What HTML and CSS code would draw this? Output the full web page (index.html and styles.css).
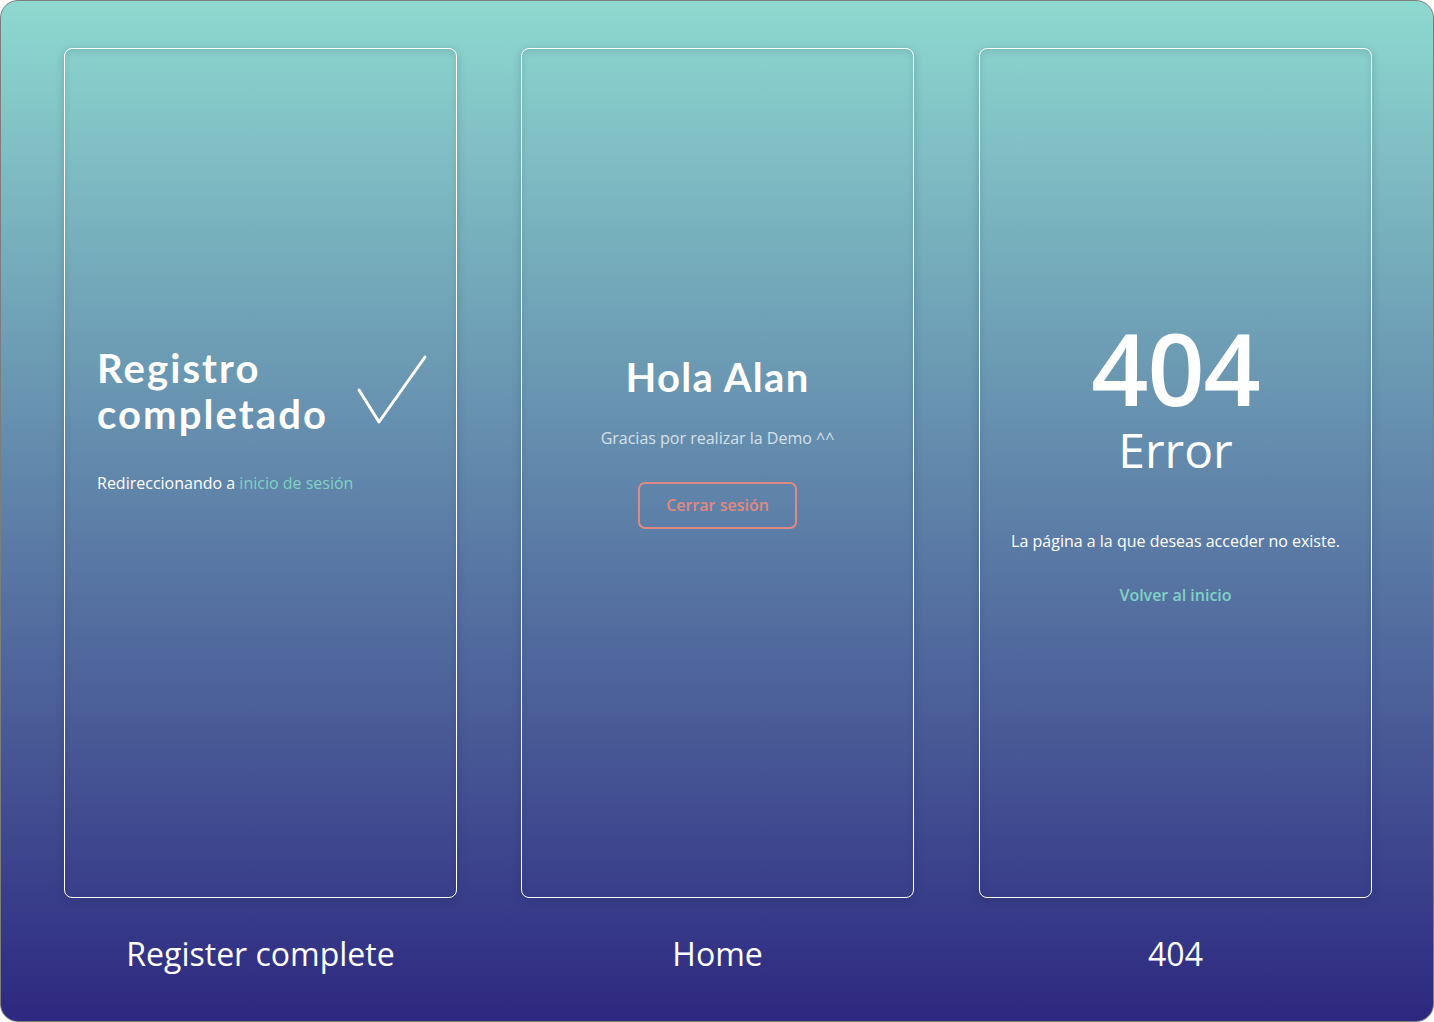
FILE: index.html
```html
<!DOCTYPE html>
<html lang="es">
<head>
<meta charset="utf-8">
<title>Screens</title>
<link rel="stylesheet" href="styles.css">
</head>
<body>
<div class="frame">
  <div class="grid">
    <div class="col">
      <div class="card card-register">
        <div class="reg-row">
          <h1 class="title title-reg">Registro<br>completado</h1>
          <svg class="check" width="72" height="72" viewBox="0 0 72 72" aria-hidden="true">
            <polyline points="3,36 23,68 69,3" fill="none" stroke="#ffffff" stroke-width="3" stroke-linecap="round" stroke-linejoin="round"/>
          </svg>
        </div>
        <p class="redirect">Redireccionando a <a class="link" href="#">inicio de sesión</a></p>
      </div>
      <div class="label">Register complete</div>
    </div>
    <div class="col">
      <div class="card card-home">
        <h1 class="title title-home">Hola Alan</h1>
        <p class="thanks">Gracias por realizar la Demo ^^</p>
        <button class="logout">Cerrar sesión</button>
      </div>
      <div class="label">Home</div>
    </div>
    <div class="col col-last">
      <div class="card card-404">
        <div class="big">404</div>
        <div class="error">Error</div>
        <p class="missing">La página a la que deseas acceder no existe.</p>
        <a class="back" href="#">Volver al inicio</a>
      </div>
      <div class="label">404</div>
    </div>
  </div>
</div>
</body>
</html>
```

FILE: styles.css
```css
* { box-sizing: border-box; }
html, body { margin: 0; padding: 0; background: #ffffff; }
body { font-family: "Open Sans", "Noto Sans", sans-serif; color: #ffffff; }

.frame {
  width: 1434px;
  height: 1022px;
  border: 1px solid #7d7d7d;
  border-radius: 18px;
  background: linear-gradient(to bottom, #8ed9d0 0%, #2d2880 100%);
  padding: 47px 0 0 63px;
  overflow: hidden;
}

.grid {
  display: grid;
  grid-template-columns: 393px 393px 393px;
  column-gap: 64px;
}

.col { display: flex; flex-direction: column; align-items: stretch; }
.col-last { margin-left: 1px; margin-right: -1px; }

.card {
  height: 850px;
  border: 1px solid #ffffff;
  border-radius: 8px;
  box-shadow: 0 2px 8px rgba(20, 30, 70, 0.22), inset 0 3px 6px rgba(20, 30, 70, 0.12);
  display: flex;
  flex-direction: column;
}

.title {
  margin: 0;
  font-family: "Lato", "Open Sans", sans-serif;
  font-weight: 700;
  font-size: 40px;
  line-height: 46px;
  color: #ffffff;
}
.title-reg { letter-spacing: 2.1px; }
.title-home { letter-spacing: 1.3px; line-height: 48px; text-align: center; }

/* Card 1 */
.card-register { padding: 296px 28px 0 32px; }
.reg-row { display: flex; align-items: center; justify-content: space-between; }
.check { display: block; margin-top: -2px; }
.redirect {
  margin: 35px 0 0;
  font-size: 16px;
  line-height: 22px;
}
.link { color: #80d2c5; text-decoration: none; }

/* Card 2 */
.card-home { padding-top: 304px; align-items: center; }
.thanks {
  margin: 26px 0 0;
  font-size: 16px;
  line-height: 22px;
  color: #d6e0ea;
}
.logout {
  margin-top: 33px;
  width: 159px;
  height: 47px;
  border: 2px solid #e08a83;
  border-radius: 7px;
  background: transparent;
  color: #e08a83;
  font-family: "Open Sans", sans-serif;
  font-weight: 600;
  font-size: 16px;
  padding: 0 0 1px;
}

/* Card 3 */
.card-404 { padding-top: 268px; align-items: center; }
.big {
  font-size: 100px;
  line-height: 100px;
  font-weight: 600;
  letter-spacing: -1px;
}
.error {
  margin-top: 9px;
  font-size: 48px;
  line-height: 48px;
}
.missing {
  margin: 56px 0 0;
  font-size: 16px;
  line-height: 22px;
}
.back {
  margin-top: 32px;
  font-size: 16px;
  line-height: 22px;
  font-weight: 600;
  color: #80d2c5;
  text-decoration: none;
}

.label {
  margin-top: 34px;
  text-align: center;
  font-size: 32px;
  line-height: 44px;
  color: #ffffff;
}
```
